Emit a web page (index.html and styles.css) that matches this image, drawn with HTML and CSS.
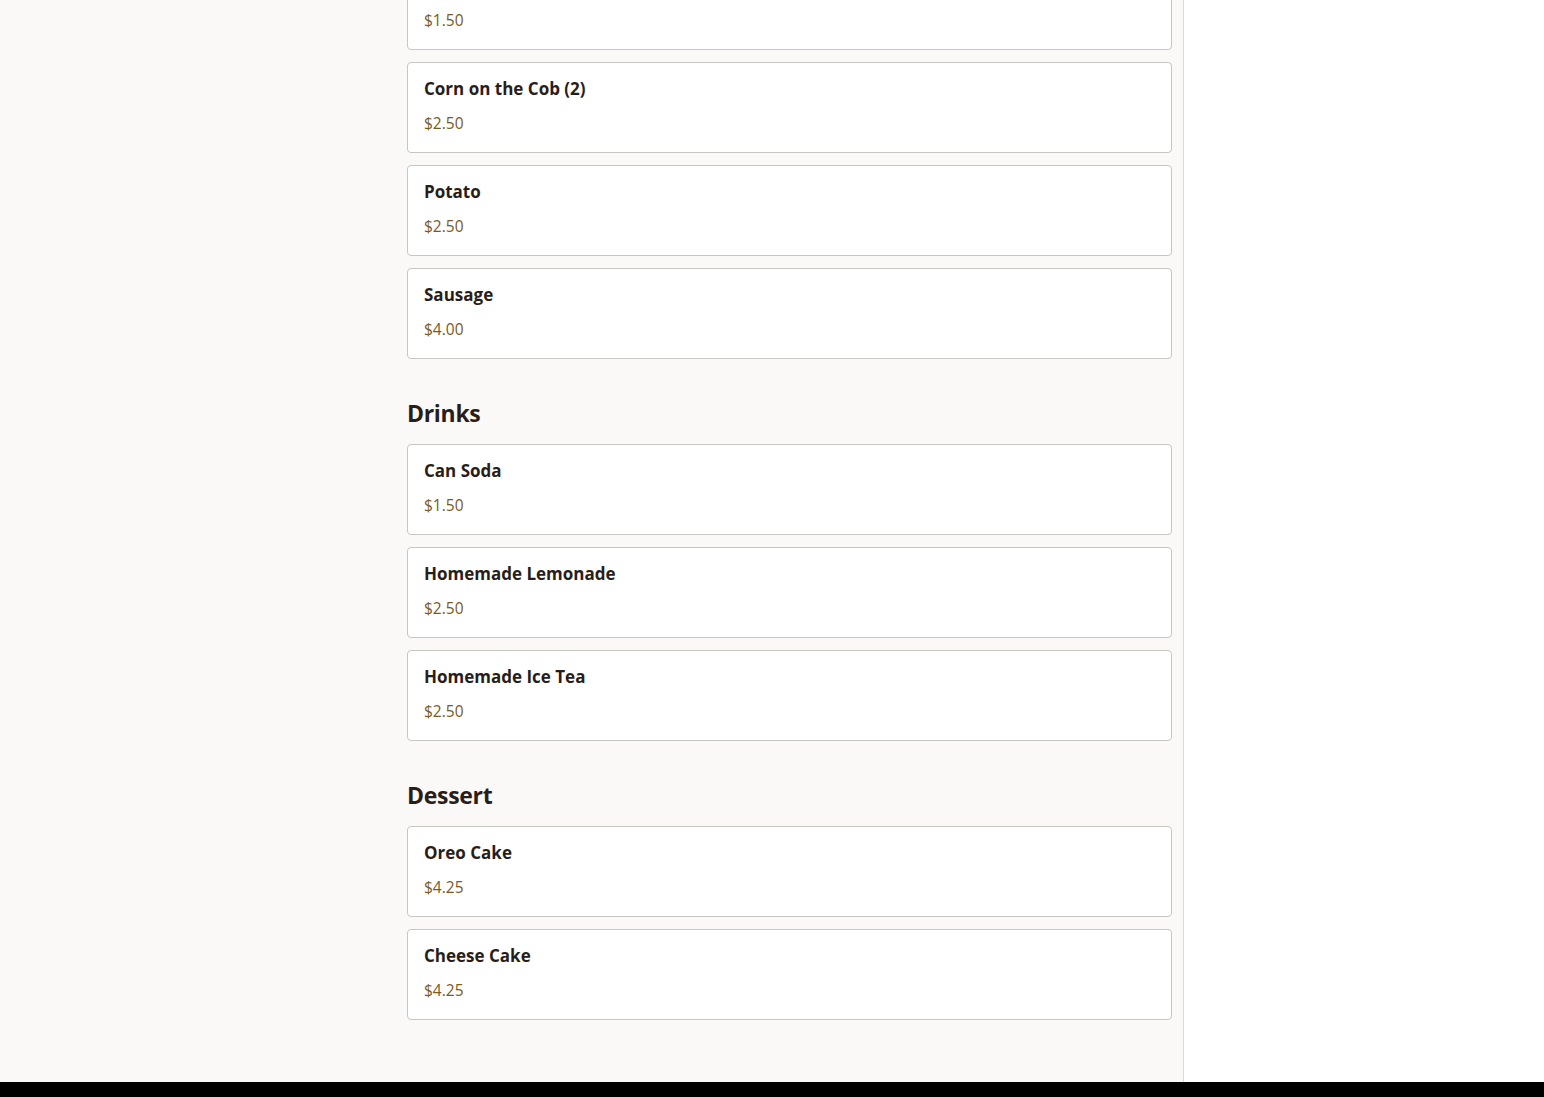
FILE: index.html
```html
<!DOCTYPE html>
<html lang="en">
<head>
<meta charset="utf-8">
<title>Menu</title>
<link rel="stylesheet" href="styles.css">
</head>
<body>
<div class="layout">
  <main class="main">
    <div class="menu">
      <section class="section section-first">
        <div class="item">
          <div class="item-name">Chips</div>
          <div class="item-price">$1.50</div>
        </div>
        <div class="item">
          <div class="item-name">Corn on the Cob (2)</div>
          <div class="item-price">$2.50</div>
        </div>
        <div class="item">
          <div class="item-name">Potato</div>
          <div class="item-price">$2.50</div>
        </div>
        <div class="item">
          <div class="item-name">Sausage</div>
          <div class="item-price">$4.00</div>
        </div>
      </section>
      <section class="section">
        <h2 class="section-title">Drinks</h2>
        <div class="item">
          <div class="item-name">Can Soda</div>
          <div class="item-price">$1.50</div>
        </div>
        <div class="item">
          <div class="item-name">Homemade Lemonade</div>
          <div class="item-price">$2.50</div>
        </div>
        <div class="item">
          <div class="item-name">Homemade Ice Tea</div>
          <div class="item-price">$2.50</div>
        </div>
      </section>
      <section class="section">
        <h2 class="section-title">Dessert</h2>
        <div class="item">
          <div class="item-name">Oreo Cake</div>
          <div class="item-price">$4.25</div>
        </div>
        <div class="item">
          <div class="item-name">Cheese Cake</div>
          <div class="item-price">$4.25</div>
        </div>
      </section>
    </div>
  </main>
  <aside class="aside"></aside>
</div>
<footer class="footer"></footer>
</body>
</html>
```
FILE: styles.css
```css
html, body {
  margin: 0;
  padding: 0;
}
body {
  font-family: "Open Sans", "Noto Sans", sans-serif;
  color: #2a1d18;
  background: #ffffff;
  overflow: hidden;
}
.layout {
  display: flex;
  align-items: stretch;
}
.main {
  width: 1183px;
  background: #faf9f7;
  border-right: 1px solid #dcd9d6;
  padding-bottom: 62px;
}
.aside {
  flex: 1;
  background: #ffffff;
}
.menu {
  width: 765px;
  margin-left: 407px;
  margin-top: -41px;
}
.section {
  display: flex;
  flex-direction: column;
  gap: 12px;
}
.section-title {
  margin: 38px 0 3px;
  font-size: 23px;
  line-height: 32px;
  font-weight: 700;
  letter-spacing: -0.3px;
  color: #2a1d18;
}
.item {
  background: #ffffff;
  border: 1px solid #c9c5c1;
  border-radius: 4px;
  padding: 16px 16px;
  height: 57px;
  display: flex;
  flex-direction: column;
}
.item-name {
  font-size: 17px;
  line-height: 19px;
  font-weight: 700;
  color: #2a1d18;
  margin-bottom: 12px;
}
.item-price {
  font-size: 15.5px;
  line-height: 26px;
  color: #7a5a1e;
}
.footer {
  height: 15px;
  background: #000000;
}
```
